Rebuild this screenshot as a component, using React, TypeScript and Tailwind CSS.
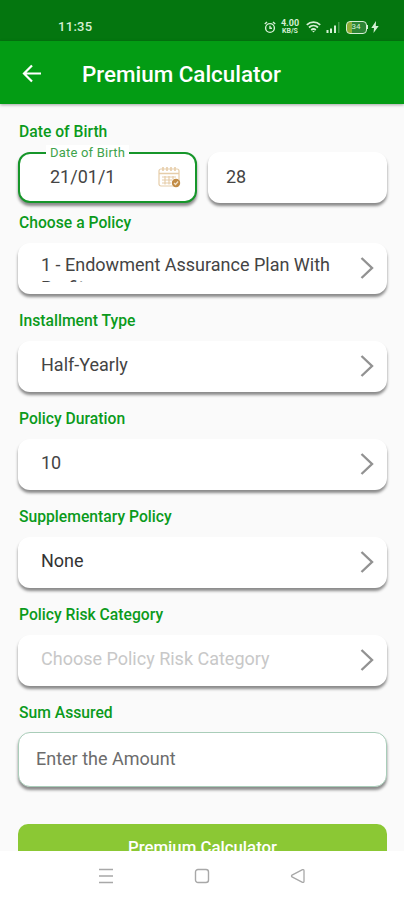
import type { ReactNode } from 'react';

const policyFields = [
  { label: 'Choose a Policy', value: '1 - Endowment Assurance Plan With Profit', style: 'pt-[10px] text-[#444]' },
  { label: 'Installment Type', value: 'Half-Yearly', style: 'pt-[12px] text-[#444]' },
  { label: 'Policy Duration', value: '10', style: 'pt-[12px] text-[#444]' },
  { label: 'Supplementary Policy', value: 'None', style: 'pt-[12px] text-[#333]' },
  { label: 'Policy Risk Category', value: 'Choose Policy Risk Category', style: 'pt-[12px] text-[#c8c8c8]' },
];

const cardShadow = 'shadow-[0_3px_3px_rgba(0,0,0,0.45)]';

function StatusBar() {
  return (
    <div className="flex h-[41px] shrink-0 items-end bg-[#04760f] pb-[6px] pl-[58px] pr-[25px] text-[#d5efd5]">
      <span className="text-[13px] font-medium leading-4 tracking-[0.3px]">11:35</span>
      <div className="ml-auto flex h-4 items-center">
        {/* Alarm */}
        <svg width="12" height="13" viewBox="0 0 12 13" fill="none" stroke="currentColor" strokeWidth="1.4">
          <circle cx="6" cy="7" r="4.4" />
          <path d="M6 4.8v2.5h2M.8 3 3 1M11.2 3 9 1" />
        </svg>
        <div className="ml-[5px] flex w-[19px] flex-col items-center font-bold">
          <span className="text-[9px] leading-[9px]">4.00</span>
          <span className="text-[7px] leading-[7px]">KB/S</span>
        </div>
        {/* Wifi */}
        <svg className="ml-[6px]" width="15" height="12" viewBox="0 0 15 12" fill="none" stroke="currentColor" strokeWidth="1.8">
          <path d="M.8 3.9c3.8-3.6 9.6-3.6 13.4 0M3 6.5c2.6-2.4 6.4-2.4 9 0M5.2 9c1.4-1.2 3.2-1.2 4.6 0" />
          <path d="m6.2 10 1.3 1.6L8.8 10Z" fill="currentColor" stroke="none" />
        </svg>
        {/* Signal */}
        <svg className="ml-[5px]" width="14" height="12" viewBox="0 0 14 12" fill="currentColor">
          <path d="M.5 9h2v3h-2zM4 7.5h2V12H4zM8 4.5h2V12H8z" />
          <path d="M12 1h1.5v11H12z" opacity=".3" />
        </svg>
        <div className="ml-[6px] flex h-[13px] w-[21px] items-center justify-center rounded-[4px] border-[1.5px] border-current bg-linear-to-r from-[#8fae35] from-25% to-[#2c8435] to-25% text-[8px] leading-none">
          34
        </div>
        <div className="h-[4px] w-[1.5px] bg-current" />
        <svg className="ml-[3px]" width="8" height="12" viewBox="0 0 8 12" fill="currentColor">
          <path d="M5 0 .3 7H3l-.5 5L7.7 5H4.8z" />
        </svg>
      </div>
    </div>
  );
}

function Header() {
  return (
    <header className="z-10 flex h-[63px] shrink-0 items-center bg-[#039c14] pl-[22px] pt-[3px] text-white shadow-[0_1px_3px_rgba(0,0,0,0.35)]">
      <svg width="20" height="20" viewBox="0 0 20 20" fill="none" stroke="currentColor" strokeWidth="2.2">
        <path d="M19 9.5H2.5M10 1.5l-8 8 8 8" />
      </svg>
      <h1 className="ml-[40px] text-[22.4px] font-medium leading-7">Premium Calculator</h1>
    </header>
  );
}

function FieldLabel({ children }: { children: ReactNode }) {
  return <div className="mb-[11px] pl-px text-[15.7px] font-medium leading-[18px] text-[#0b9a1c]">{children}</div>;
}

function CalendarIcon() {
  return (
    <svg width="23" height="22" viewBox="0 0 23 22" fill="none" stroke="#e6cda9" strokeWidth="1.2">
      <rect x="1" y="3" width="20" height="17" rx="2" />
      <path d="M1 7.5h20M5 1v4M9 1v4M13 1v4M17 1v4" strokeWidth="1.6" />
      <path d="M4 11h14M4 14h10M4 17h9M7 10v8.5M11 10v8.5M15 10v3.5" />
      <circle cx="18" cy="17" r="4.2" fill="#c18b45" stroke="none" />
      <path d="m16 17 1.5 1.5 2.6-3" stroke="#f3e3cb" />
    </svg>
  );
}

function Chevron() {
  return (
    <svg className="mt-[13px] shrink-0" width="14" height="24" viewBox="0 0 14 24" fill="none" stroke="#929292" strokeWidth="2.4">
      <path d="m1.5 2 10.5 10L1.5 22" />
    </svg>
  );
}

function NavigationBar() {
  return (
    <nav className="flex h-[49px] shrink-0 items-center justify-between bg-white px-[98px] text-[#a8a8a8]">
      <svg width="16" height="16" viewBox="0 0 16 16" fill="none" stroke="currentColor" strokeWidth="1.4">
        <path d="M1 1.5h14M1 8h14M1 14.5h14" />
      </svg>
      <svg width="16" height="16" viewBox="0 0 16 16" fill="none" stroke="currentColor" strokeWidth="1.4">
        <rect x="1.5" y="1.5" width="13" height="13" rx="2.5" />
      </svg>
      <svg width="16" height="16" viewBox="0 0 16 16" fill="none" stroke="currentColor" strokeWidth="1.3" strokeLinejoin="round">
        <path d="M2 7.1 12.5 1.700q1.500-.5 1.500 1v10.600q0 1.500-1.500 1L2 8.900q-1-.9 0-1.800z" />
      </svg>
    </nav>
  );
}

export default function App() {
  return (
    <div className="flex h-[900px] w-full flex-col overflow-hidden bg-[#fafafa] font-['Roboto',sans-serif]">
      <StatusBar />
      <Header />

      <main className="min-h-0 flex-1 overflow-hidden pl-[18px] pr-[17px] pt-[19px]">
        <FieldLabel>Date of Birth</FieldLabel>
        <div className="mb-[11px] flex gap-[11px]">
          <div className={`relative flex h-[51px] w-[179px] items-center rounded-[12px] border-2 border-[#16962a] bg-white pb-[2px] pl-[30px] pr-[14px] ${cardShadow}`}>
            <span className="absolute -top-[9px] left-[26px] bg-white px-[4px] text-[13px] leading-4 tracking-[0.2px] text-[#3fa34c]">
              Date of Birth
            </span>
            <span className="text-[18px] text-[#444]">21/01/1</span>
            <span className="ml-auto">
              <CalendarIcon />
            </span>
          </div>
          <div className={`flex h-[51px] flex-1 items-center rounded-[12px] bg-white pb-[2px] pl-[18px] text-[18px] text-[#444] ${cardShadow}`}>
            28
          </div>
        </div>

        {policyFields.map((field) => (
          <div key={field.label} className="mb-[18px]">
            <FieldLabel>{field.label}</FieldLabel>
            <div className={`flex h-[51px] items-start justify-between rounded-[12px] bg-white pl-[23px] pr-[13px] ${cardShadow}`}>
              {/* Long names are cut off below the first line */}
              <div className={`h-[39px] w-[300px] overflow-hidden text-[18px] leading-[23px] ${field.style}`}>
                {field.value}
              </div>
              <Chevron />
            </div>
          </div>
        ))}

        <FieldLabel>Sum Assured</FieldLabel>
        <div className={`-mt-px flex h-[55px] items-center rounded-[12px] border border-[#a9cdb9] bg-white pb-[2px] pl-[17px] text-[18px] text-[#6c6c6c] ${cardShadow}`}>
          Enter the Amount
        </div>

        <button className="mt-[37px] flex h-[48px] w-full justify-center rounded-[10px] bg-[#8bc834] pt-[11px] text-[16.8px] font-medium leading-6 text-white">
          Premium Calculator
        </button>
      </main>

      <NavigationBar />
    </div>
  );
}
